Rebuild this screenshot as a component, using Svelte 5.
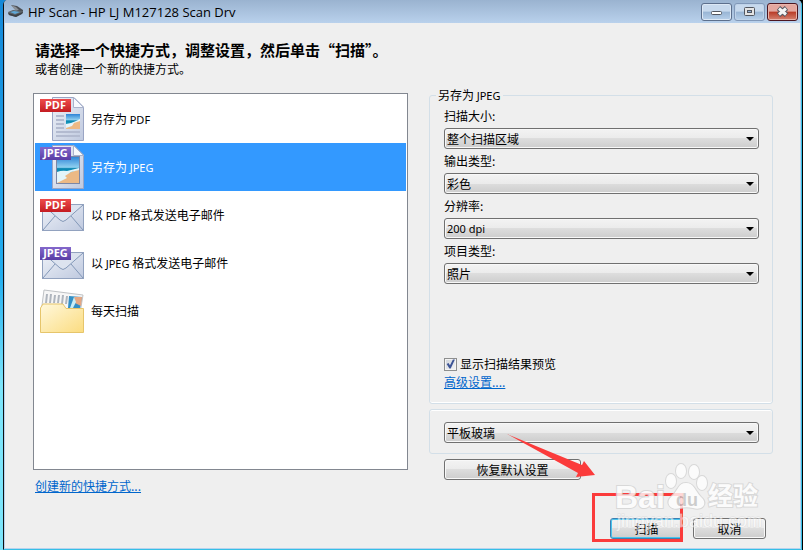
<script lang="ts">
	const shortcuts = [
		{ icon: 'page', type: 'PDF', before: '另存为', after: '' },
		{ icon: 'page', type: 'JPEG', before: '另存为', after: '' },
		{ icon: 'mail', type: 'PDF', before: '以', after: '格式发送电子邮件' },
		{ icon: 'mail', type: 'JPEG', before: '以', after: '格式发送电子邮件' },
		{ icon: 'folder', type: '', before: '每天扫描', after: '' }
	];

	const settings = [
		{ id: 'size', label: '扫描大小', value: '整个扫描区域' },
		{ id: 'output', label: '输出类型', value: '彩色' },
		{ id: 'dpi', label: '分辨率', value: '200 dpi' },
		{ id: 'item', label: '项目类型', value: '照片' }
	];

	let selected = $state(1);
	let preview = $state(true);
</script>

<div class="desktop">
	<div class="window">
		<header class="titlebar">
			<svg class="app-icon" width="16" height="14" viewBox="0 0 16 14">
				<path d="M3 0 L9 1 L15 5 L15 7 L12 7 L8 5 Z" fill="#4b4f55" />
				<path d="M3 0 L8 2 L11 5 L7 5 Z" fill="#8a9097" />
				<path d="M0 7 L5 5 L15 6 L15 8 L8 12 L1 10 Z" fill="#5d646b" />
				<path d="M2 7 L6 6 L12 7 L7 9 Z" fill="#5fa8d8" />
				<path d="M0 8 L7 10 L15 7 L14 9 L8 12 L1 10 Z" fill="#3d4146" />
			</svg>
			<h1>HP Scan - HP LJ M127128 Scan Drv</h1>
			<div class="controls">
				<button class="control" aria-label="最小化">
					<svg width="29" height="16" viewBox="0 0 29 16">
						<rect x="9.5" y="7.5" width="10" height="3" rx="1" fill="#fff" stroke="#52565f" />
					</svg>
				</button>
				<button class="control faded" aria-label="最大化">
					<svg width="29" height="16" viewBox="0 0 29 16">
						<rect x="9.5" y="3.5" width="10" height="8" rx="1" fill="#e4e4e4" stroke="#52565f" />
						<rect x="12.5" y="6.5" width="4" height="2" fill="#8fb0d8" stroke="#52565f" />
					</svg>
				</button>
				<button class="control close" aria-label="关闭">
					<svg width="29" height="16" viewBox="0 0 29 16">
						<path d="M10.500 4 L18.500 11 M18.500 4 L10.500 11" stroke="#53565f" stroke-width="5" />
						<path d="M11 4.500 L18 10.500 M18 4.500 L11 10.500" stroke="#f4f4f4" stroke-width="3" />
					</svg>
				</button>
			</div>
		</header>

		<main>
			<div class="intro">
				<h2>请选择一个快捷方式，调整设置，然后单击“扫描”。</h2>
				<p>或者创建一个新的快捷方式。</p>
			</div>

			<div class="columns">
				<section class="left">
					<div class="list">
						{#each shortcuts as item, i}
							<button class="row" class:selected={selected === i} onclick={() => (selected = i)}>
								<svg width="46" height="46" viewBox="0 0 46 46">
									{#if item.icon === 'page'}
										<path d="M12.500 1.500 H34 L43.500 11 V44.500 H12.500 Z" fill="url(#paper)" stroke="#9aa5c4" />
										<path d="M33.500 1.500 V11.500 H43.500 Z" fill="#f7f9fd" stroke="#aab3cc" />
										{#if item.type === 'PDF'}
											<path d="M16 20 H24 M16 24 H24 M16 28 H24 M16 32 H24 M16 36 H40 M16 40 H40" stroke="#b3bbd0" stroke-width="2" />
											<rect x="26" y="18" width="14" height="15" fill="url(#sea)" />
											<path d="M26 33 V30 L33 27 L40 24 V33 Z" fill="#ecb985" />
											<path d="M26 28 L31 27 L36 25 L40 23 V25 L34 27 L32 30 L26 32 Z" fill="#e6f5fb" />
										{:else}
											<rect x="16.500" y="12.500" width="23" height="27" fill="url(#sea)" stroke="#7c87a6" />
											<path d="M17 39 V36 L26 30 L39 25 V39 Z" fill="#ecb985" />
											<path d="M17 28 Q22 26 27 27 L39 24 V26 L31 28 L25 32 L27 34 L17 39 Z" fill="#e3f5fb" />
										{/if}
									{:else if item.icon === 'mail'}
										<rect x="2.500" y="12.500" width="41" height="26" fill="url(#paper)" stroke="#92a2bf" />
										<path d="M3 38 L15 24 M43 38 L31 24" stroke="#8398b8" />
										<path d="M3 13 L20 28 Q23 31 26 28 L43 13" fill="#dce3ef" stroke="#8398b8" />
									{:else}
										<path d="M4 2 L43 7 L40 25 H1 Z" fill="#f6f6f6" stroke="#bfc2c5" />
										<path d="M7 6 L6 15 M11 6 L10 15 M15 7 L14 15 M19 7 L18 15 M23 7 L22 16 M27 8 L26 16" stroke="#afb5bd" stroke-width="2" />
										<path d="M29 8 L42 9 L40 21 L28 20 Z" fill="#338fc5" />
										<path d="M34 9 L42 9 L41 18 L35 15 Z" fill="#e6a782" />
										<path d="M34 9 L36 14 L33 20 H30 Z" fill="#c8edf6" />
										<path d="M.500 44.500 V20 L3 16 H23 L26 20.500 H43.500 V44.500 Z" fill="url(#folder)" stroke="#e6c56b" />
									{/if}
									{#if item.type}
										<g transform={item.icon === 'mail' ? 'translate(0 4)' : ''}>
											<rect y="3" width="31" height="13" fill={item.type === 'PDF' ? 'url(#red)' : 'url(#purple)'} />
											<text x="15.500" y="13" text-anchor="middle">{item.type}</text>
										</g>
									{/if}
								</svg>
								<span>{item.before} <span class="latin">{item.type}</span> {item.after}</span>
							</button>
						{/each}
					</div>
					<a href="#new">创建新的快捷方式...</a>
				</section>

				<section class="right">
					<fieldset class="settings">
						<legend>另存为 <span class="latin">JPEG</span></legend>
						{#each settings as s}
							<label class="caption" for={s.id}>{s.label}:</label>
							<div class="combo">
								<select id={s.id} class:latin={s.id === 'dpi'}><option>{s.value}</option></select>
							</div>
						{/each}
						<div class="extras">
							<label class="check"><input type="checkbox" bind:checked={preview} />显示扫描结果预览</label>
							<a href="#advanced">高级设置....</a>
						</div>
					</fieldset>
					<div class="source">
						<div class="combo">
							<select aria-label="扫描来源"><option>平板玻璃</option></select>
						</div>
					</div>
					<button class="push restore">恢复默认设置</button>
					<footer>
						<button class="push default">扫描</button>
						<button class="push">取消</button>
					</footer>
				</section>
			</div>
		</main>
	</div>

	<svg class="marks" viewBox="0 0 803 550" aria-hidden="true">
		<defs>
			<linearGradient id="paper" x2="1" y2="1"><stop stop-color="#eef2f8" /><stop offset="1" stop-color="#bfc9df" /></linearGradient>
			<linearGradient id="sea" x2="0" y2="1"><stop stop-color="#2c83d6" /><stop offset=".4" stop-color="#8fd0f0" /><stop offset=".45" stop-color="#0785b0" /><stop offset="1" stop-color="#46c3d4" /></linearGradient>
			<linearGradient id="folder" x2="1" y2="1"><stop stop-color="#fff8dc" /><stop offset="1" stop-color="#fbdc80" /></linearGradient>
			<linearGradient id="red" x2="0" y2="1"><stop stop-color="#ee4b4b" /><stop offset="1" stop-color="#c41c22" /></linearGradient>
			<linearGradient id="purple" x2="0" y2="1"><stop stop-color="#8468cb" /><stop offset="1" stop-color="#593da5" /></linearGradient>
		</defs>
		<path d="M507 434 L582 465 L584 461 L595 475 L576 477 L578 473 Z" fill="#fb3b3b" />
		<rect x="593.500" y="494.500" width="88" height="46" fill="none" stroke="#fb3b3b" stroke-width="3" />
		<g class="watermark">
			<ellipse cx="671" cy="481" rx="5" ry="7" />
			<ellipse cx="681" cy="471" rx="5" ry="7" />
			<ellipse cx="694" cy="472" rx="5" ry="7" />
			<ellipse cx="702" cy="483" rx="5" ry="7" />
			<path d="M686 483 C678 483 678 491 672 496 C664 503 671 511 680 508 C684 507 689 507 693 508 C703 511 708 503 701 497 C695 491 694 483 686 483 Z" />
			<text x="615" y="508" font-size="32">Bai</text>
			<text class="du" x="676" y="506" font-size="18">du</text>
			<text x="708" y="505" font-size="25">经验</text>
			<text class="url" x="617" y="527" font-size="18">jingyan.baidu.com</text>
		</g>
	</svg>
</div>

<style>
	:global(body) {
		margin: 0;
		font-family: 'Noto Sans CJK SC', sans-serif;
		font-size: 12px;
		line-height: 16px;
		color: #000;
	}

	.desktop {
		position: relative;
		box-sizing: border-box;
		min-height: 100vh;
		padding: 0 1px 0 3px;
		display: flex;
		overflow: hidden;
		background: linear-gradient(90deg, transparent 50%, #000 50%), linear-gradient(#1488d8, #22aef0 50%, #7ce4fa 70%);
	}

	.window {
		flex: 1;
		display: flex;
		flex-direction: column;
		box-sizing: border-box;
		border: solid #35bfe6;
		border-width: 0 1px 1px;
		border-left-color: #111;
		border-radius: 5px 5px 0 0;
		background: #efefef;
		box-shadow: inset 1px -1px #b7d3ee, inset -1px 0 #b7d3ee;
	}

	.titlebar {
		display: flex;
		align-items: center;
		height: 23px;
		padding: 0 3px 0 4px;
		background: linear-gradient(#9ab3d0, #b9d1ec);
		border-radius: 4px 4px 0 0;
	}

	h1 {
		flex: 1;
		margin: 0 0 0 4px;
		font: 13px/20px 'Open Sans', sans-serif;
	}

	.controls {
		display: flex;
		gap: 2px;
	}

	.control {
		box-sizing: border-box;
		width: 31px;
		height: 18px;
		padding: 0;
		border: 1px solid #5c6f8c;
		border-radius: 3px;
		background: linear-gradient(#c7d9ed 45%, #98b5d4 50%, #b8d1eb);
		box-shadow: inset 0 0 0 1px #dce8f5;
	}

	.control svg {
		display: block;
	}

	.faded {
		border-color: #8198b8;
		box-shadow: inset 0 0 0 1px #bfd3e9;
	}

	.close {
		border-color: #4b1520;
		background: linear-gradient(#e3a79f 45%, #b93b27 50%, #d58371);
		box-shadow: inset 0 0 0 1px #e8b4ab;
	}

	main {
		flex: 1;
		display: flex;
		flex-direction: column;
		padding: 16px 28px 10px 29px;
	}

	.intro {
		padding-left: 2px;
	}

	h2 {
		margin: 0;
		font-size: 15px;
		line-height: 22px;
		font-weight: bold;
	}

	p {
		margin: 0;
	}

	.columns {
		flex: 1;
		display: grid;
		grid-template-columns: minmax(0, 375fr) minmax(0, 344fr);
		gap: 21px;
		padding-top: 10px;
	}

	.left {
		display: flex;
		flex-direction: column;
		align-items: flex-start;
		padding: 6px 0 45px;
	}

	.left a {
		margin: 8px 0 0 2px;
	}

	a {
		color: #0066cc;
		text-decoration: underline;
	}

	.list {
		flex: 1;
		box-sizing: border-box;
		width: 100%;
		padding: 1px;
		border: 1px solid #828790;
		background: #fff;
	}

	.row {
		display: flex;
		align-items: center;
		gap: 5px;
		width: 100%;
		height: 48px;
		padding: 0 5px;
		border: 0;
		background: none;
		font: inherit;
		color: inherit;
		text-align: left;
	}

	.row.selected {
		background: #3399ff;
		color: #fff;
	}

	.row text {
		font: bold 11px 'Open Sans', sans-serif;
		fill: #fff;
	}

	.latin {
		font-family: 'Noto Sans', sans-serif;
		font-size: 11px;
	}

	.right {
		display: flex;
		flex-direction: column;
	}

	fieldset {
		flex: 1;
		display: flex;
		flex-direction: column;
		min-width: 0;
		margin: 0;
		padding: 0 13px 13px 14px;
		border: 1px solid #d3dfe8;
		border-radius: 3px;
		box-shadow: inset 0 -1px #fff;
	}

	legend {
		margin-left: -8px;
		padding: 0 2px;
	}

	.caption {
		display: block;
		padding: 4px 0;
	}

	.combo {
		position: relative;
		display: flex;
	}

	.combo::after {
		content: '';
		position: absolute;
		right: 5px;
		top: 9px;
		border: 4px solid transparent;
		border-top-color: #000;
		border-bottom: 0;
		pointer-events: none;
	}

	select,
	.push {
		box-sizing: border-box;
		height: 21px;
		border: 1px solid #707070;
		border-radius: 3px;
		background: linear-gradient(#f3f3f3, #ebebeb 50%, #dddddd 50%, #cdcdcd);
		box-shadow: inset 0 0 0 1px #f8f8f8;
		color: #000;
		font-family: inherit;
		font-size: 12px;
		line-height: 16px;
	}

	select {
		appearance: none;
		width: 100%;
		padding: 0 20px 0 2px;
	}

	select.latin {
		font-family: 'Noto Sans', sans-serif;
		font-size: 11px;
	}

	.extras {
		display: flex;
		flex-direction: column;
		align-items: flex-start;
		gap: 2px;
		margin-top: auto;
	}

	.check {
		display: flex;
		align-items: center;
		gap: 3px;
	}

	input {
		appearance: none;
		box-sizing: border-box;
		width: 13px;
		height: 13px;
		margin: 0;
		border: 1px solid #8e8f8f;
		background: linear-gradient(135deg, #cfd3da, #f6f6f6);
		box-shadow: inset 0 0 0 1px #f4f4f4;
	}

	input:checked::before {
		content: '';
		display: block;
		width: 11px;
		height: 11px;
		background: #3d5496;
		clip-path: polygon(15% 50%, 32% 42%, 45% 62%, 72% 8%, 90% 8%, 52% 92%, 40% 92%);
	}

	.source {
		margin: 5px 0;
		padding: 12px 13px 10px 14px;
		border: 1px solid #d3dfe8;
		border-radius: 3px;
		box-shadow: inset 0 1px #fff;
	}

	.push {
		width: 73px;
		padding: 0;
	}

	.restore {
		width: 137px;
		margin-left: 15px;
	}

	.default {
		border-color: #3c7fb1;
		box-shadow: inset 0 0 0 1px #48c4ee;
	}

	footer {
		display: flex;
		justify-content: flex-end;
		gap: 10px;
		margin-top: 38px;
		padding-right: 7px;
	}

	.marks {
		position: absolute;
		inset: 0;
		width: 100%;
		pointer-events: none;
	}

	.watermark {
		fill: #fff;
		stroke: #d3d3d3;
		stroke-width: 2px;
		paint-order: stroke;
		opacity: 0.8;
		font-family: 'Liberation Sans', 'Noto Sans CJK SC', sans-serif;
		font-weight: bold;
	}

	.du {
		fill: #c4c4c4;
		stroke: none;
	}

	.url {
		font-weight: normal;
		stroke-width: 1px;
		opacity: 0.7;
	}
</style>
